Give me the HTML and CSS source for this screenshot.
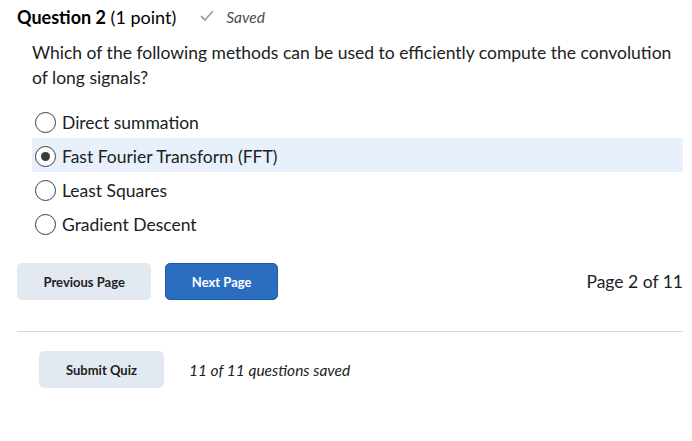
FILE: index.html
```html
<!DOCTYPE html>
<html>
<head>
<meta charset="utf-8">
<link rel="stylesheet" href="styles.css">
</head>
<body>
<div class="page">
  <div class="qhead">
    <span class="qtitle"><b>Question 2</b> (1 point)</span>
    <span class="saved">
      <svg class="check" width="14" height="12" viewBox="0 0 14 12"><path d="M1.5 6.5 L5 10 L12.5 1.5" fill="none" stroke="#a0a4a8" stroke-width="1.8" stroke-linecap="round" stroke-linejoin="round"/></svg>
      <i>Saved</i>
    </span>
  </div>
  <p class="qtext">Which of the following methods can be used to efficiently compute the convolution of long signals?</p>
  <div class="options">
    <label class="opt"><span class="radio"></span><span>Direct summation</span></label>
    <label class="opt selected"><span class="radio on"></span><span>Fast Fourier Transform (FFT)</span></label>
    <label class="opt"><span class="radio"></span><span>Least Squares</span></label>
    <label class="opt"><span class="radio"></span><span>Gradient Descent</span></label>
  </div>
  <div class="nav">
    <div class="btns">
      <button class="btn">Previous Page</button>
      <button class="btn primary">Next Page</button>
    </div>
    <span class="pageno">Page 2 of 11</span>
  </div>
  <hr class="sep">
  <div class="submit">
    <button class="btn sub">Submit Quiz</button>
    <i class="count">11 of 11 questions saved</i>
  </div>
</div>
</body>
</html>
```
FILE: styles.css
```css
* { box-sizing: border-box; }
body { margin: 0; background: #fff; font-family: Lato, "Open Sans", sans-serif; color: #202122; }
.page { padding: 6px 9px 0 17px; }
.qhead { display: flex; align-items: center; height: 22px; }
.qtitle { font-size: 18px; color: #000; }
.qtitle b { font-weight: 700; }
.saved { display: flex; align-items: center; margin-left: 24px; font-size: 15.5px; color: #494c4e; }
.check { margin-right: 12px; margin-top: -2px; }
.qtext { margin: 12px 0 0 15px; font-size: 17.5px; line-height: 25px; color: #202122; max-width: 660px; }
.options { margin: 14px 0 0 15px; display: flex; flex-direction: column; }
.opt { display: flex; align-items: center; height: 34px; padding-left: 3px; padding-top: 2px; font-size: 17.5px; color: #202122; }
.opt.selected { background: #e8f1fb; }
.radio { width: 21px; height: 21px; border: 1px solid #3a3d40; border-radius: 50%; background: #fff; margin-right: 6px; display: flex; align-items: center; justify-content: center; }
.radio.on::after { content: ""; width: 9px; height: 9px; border-radius: 50%; background: #3a3d40; }
.nav { display: flex; justify-content: space-between; align-items: center; margin-top: 23px; }
.btns { display: flex; gap: 14px; }
.btn { font-family: Lato, sans-serif; font-weight: 700; font-size: 13px; height: 37px; border: none; border-radius: 5px; background: #e3e9f1; color: #202122; padding: 0 26.5px; }
.btn.primary { background: #2b6ec0; color: #fff; border: 1px solid #1f5aa3; padding: 0 25.5px; }
.pageno { font-size: 17.5px; color: #202122; }
.sep { margin: 31px 0 0; border: none; border-top: 1px solid #d6dbe2; }
.submit { display: flex; align-items: center; margin: 19px 0 0 22px; }
.btn.sub { padding: 0 27px; height: 37px; }
.count { font-size: 15.5px; margin-left: 25px; color: #202122; }
```
